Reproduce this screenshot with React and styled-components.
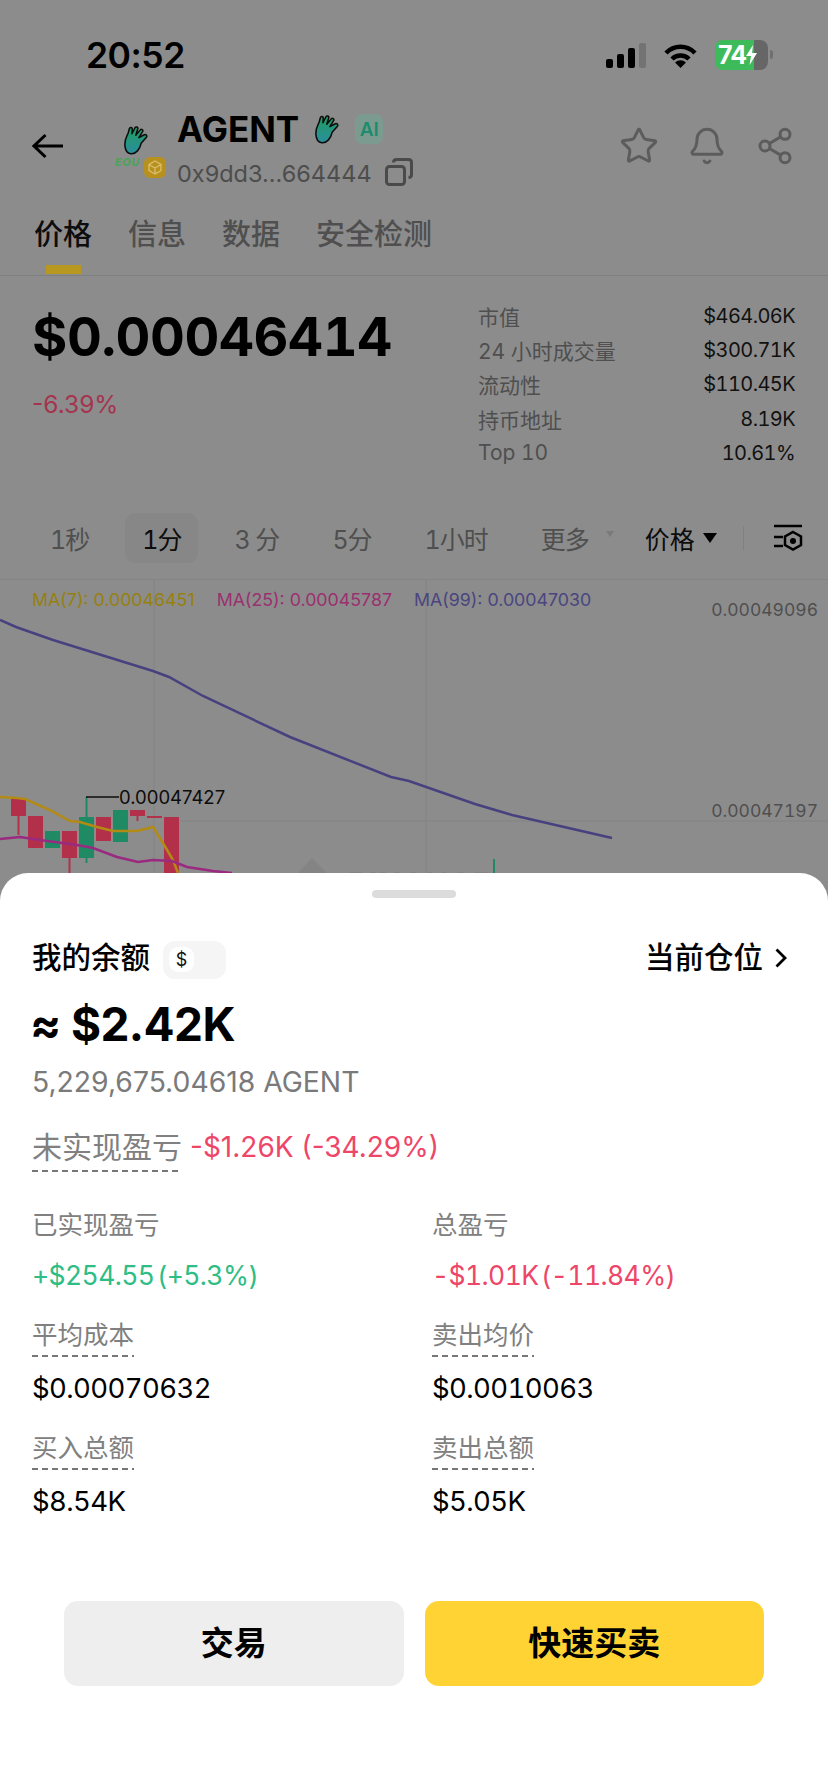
import React from 'react';
import styled, { createGlobalStyle } from 'styled-components';
import { Star, Bell, Share2 } from 'lucide-react';

const GlobalStyle = createGlobalStyle`
  html, body {
    margin: 0;
    padding: 0;
    background: #8c8c8c;
    font-family: Inter, "Noto Sans CJK SC", sans-serif;
  }
  * {
    box-sizing: border-box;
  }
`;

const Page = styled.div`
  width: 828px;
  height: 1792px;
  overflow: hidden;
  background: #8c8c8c;
`;

const Backdrop = styled.div`
  height: 873px;
  overflow: hidden;
`;

/* status bar */
const StatusBar = styled.div`
  height: 110px;
  display: flex;
  align-items: center;
  padding: 0 60px 0 86px;
`;

const Clock = styled.div`
  font-size: 35.5px;
  font-weight: 600;
  letter-spacing: -0.5px;
  color: #000;
`;

const StatusIcons = styled.div`
  margin-left: auto;
  display: flex;
  align-items: center;
  gap: 17px;
`;

const Signal = styled.div`
  display: flex;
  align-items: flex-end;
  gap: 4px;
  height: 25px;
`;

const SignalBar = styled.span`
  width: 7px;
  height: ${(p) => p.$h}px;
  border-radius: 2px;
  background: ${(p) => (p.$off ? '#737373' : '#000')};
`;

const Battery = styled.div`
  position: relative;
  width: 53px;
  height: 30px;
  padding-left: 3px;
  border-radius: 8px;
  display: flex;
  align-items: center;
  font-size: 25px;
  font-weight: 700;
  letter-spacing: -0.8px;
  color: #fff;
  background: linear-gradient(90deg, #3dbb5a 0 39px, #666 39px);

  &::after {
    content: '';
    position: absolute;
    right: -5px;
    top: 10px;
    width: 3px;
    height: 9px;
    border-radius: 0 3px 3px 0;
    background: #6f6f6f;
  }
`;

/* token header */
const Header = styled.div`
  height: 90px;
  display: flex;
  align-items: flex-start;
  padding: 0 33px 0 32px;
`;

const BackButton = styled.svg`
  width: 32px;
  height: 26px;
  margin-top: 23px;
  flex: none;
`;

const TokenLogo = styled.div`
  width: 51px;
  margin: 16px 0 0 51px;
  display: flex;
  flex-direction: column;
  gap: 2px;
`;

const LogoHand = styled.div`
  height: 29px;
  padding-left: 8px;
`;

const LogoFoot = styled.div`
  display: flex;
  align-items: flex-start;
  gap: 2px;
`;

const Eou = styled.span`
  width: 27px;
  margin-top: 1px;
  font-size: 11px;
  line-height: 9px;
  font-weight: 800;
  font-style: italic;
  letter-spacing: 0.5px;
  color: #4fa25c;
`;

const ChainBadge = styled.span`
  width: 22px;
  height: 21px;
  border-radius: 6px;
  background: #b8901e;
  display: flex;
  align-items: center;
  justify-content: center;
`;

const TokenInfo = styled.div`
  margin: 2px 0 0 11px;
`;

const TitleRow = styled.div`
  display: flex;
  align-items: center;
  height: 34px;
`;

const Title = styled.span`
  font-size: 35px;
  line-height: 34px;
  font-weight: 700;
  color: #000;
`;

const TitleHand = styled.span`
  display: flex;
  margin-left: 15px;
`;

const AiBadge = styled.span`
  width: 28px;
  height: 30px;
  margin-left: 15px;
  border-radius: 7px;
  background: #7c9b90;
  color: #1d8c6c;
  font-size: 19px;
  font-weight: 600;
  display: flex;
  align-items: center;
  justify-content: center;
`;

const AddressRow = styled.div`
  margin-top: 9px;
  height: 36px;
  display: flex;
  align-items: center;
  gap: 13px;
`;

const Address = styled.span`
  font-size: 23.5px;
  color: #4d4d4d;
`;

const CopyIcon = styled.svg`
  width: 28px;
  height: 28px;
  margin-top: -2px;
`;

const HeaderActions = styled.div`
  margin: 16px 0 0 auto;
  display: flex;
  gap: 28px;
  color: #5c5c5c;
`;

/* tabs */
const Tabs = styled.div`
  height: 76px;
  padding: 0 0 0 34px;
  display: flex;
  gap: 36px;
  border-bottom: 1px solid #808080;
`;

const Tab = styled.div`
  position: relative;
  font-size: 29px;
  line-height: 40px;
  margin-top: 15px;
  font-weight: 500;
  color: ${(p) => (p.$active ? '#0d0d0d' : '#4f4f4f')};

  ${(p) =>
    p.$active &&
    `&::after {
      content: '';
      position: absolute;
      left: 12px;
      top: 50px;
      width: 35px;
      height: 9px;
      background: #b8981f;
    }`}
`;

/* price block */
const PriceBlock = styled.div`
  height: 237px;
  display: flex;
  justify-content: space-between;
  padding: 0 33px 0 32px;
`;

const PriceColumn = styled.div`
  padding-top: 31px;
`;

const Price = styled.div`
  font-size: 54px;
  line-height: 60px;
  font-weight: 700;
  letter-spacing: -0.4px;
  font-variant-numeric: tabular-nums;
  color: #000;
`;

const PriceChange = styled.div`
  margin-top: 23px;
  font-size: 24.5px;
  line-height: 28px;
  color: #a5344f;
`;

const Stats = styled.div`
  width: 317px;
  padding-top: 23px;
`;

const StatRow = styled.div`
  height: 34.2px;
  display: flex;
  align-items: center;
  justify-content: space-between;
  font-size: 20px;
  letter-spacing: -0.6px;
  font-variant-numeric: tabular-nums;
  color: #111;
`;

const StatLabel = styled.span`
  font-size: 21px;
  letter-spacing: 0;
  color: #4f4f4f;
`;

/* interval bar */
const IntervalBar = styled.div`
  height: 67px;
  padding: 0 0 17px 33px;
  display: flex;
  align-items: center;
  gap: 19px;
  border-bottom: 1px solid #848484;
`;

const Interval = styled.div`
  position: relative;
  height: 50px;
  padding: 0 17px;
  border-radius: 10px;
  display: flex;
  align-items: center;
  font-size: 25px;
  letter-spacing: -1px;
  font-variant-numeric: tabular-nums;
  white-space: pre;
  color: ${(p) => (p.$active ? '#0d0d0d' : '#4f4f4f')};
  background: ${(p) => (p.$active ? '#878787' : 'transparent')};

  ${(p) =>
    p.$more &&
    `&::after {
      content: '';
      position: absolute;
      right: -8px;
      top: 18px;
      border-left: 4px solid transparent;
      border-right: 4px solid transparent;
      border-top: 6px solid #7a7a7a;
    }`}
`;

const PriceSelect = styled.div`
  display: flex;
  align-items: center;
  gap: 8px;
  margin-left: 20px;
  font-size: 25px;
  color: #0d0d0d;
`;

const Caret = styled.span`
  width: 0;
  height: 0;
  border-left: 7px solid transparent;
  border-right: 7px solid transparent;
  border-top: 10px solid #000;
`;

const BarDivider = styled.span`
  width: 1px;
  height: 24px;
  margin-left: 7px;
  background: #808080;
`;

const ChartSettings = styled.svg`
  width: 30px;
  height: 27px;
  margin-left: 10px;
`;

/* chart */
const Chart = styled.div`
  position: relative;
  height: 293px;
`;

const ChartCanvas = styled.svg`
  position: absolute;
  inset: 0;
  width: 828px;
  height: 293px;
`;

const Legend = styled.div`
  position: relative;
  display: flex;
  gap: 22px;
  padding: 9px 32px 0;
  font-size: 17.8px;
  line-height: 22px;
`;

const LegendItem = styled.span`
  color: ${(p) => p.$color};
`;

const AxisLabel = styled.span`
  position: absolute;
  right: 10px;
  top: ${(p) => p.$top}px;
  font-size: 17.5px;
  line-height: 22px;
  font-variant-numeric: tabular-nums;
  color: #4f4f4f;
`;

const Callout = styled.span`
  position: absolute;
  left: 119px;
  top: 206px;
  font-size: 18.5px;
  line-height: 22px;
  color: #0d0d0d;
`;

const Watermark = styled.span`
  position: absolute;
  left: 348px;
  top: 285px;
  font-size: 30px;
  line-height: 36px;
  font-weight: 700;
  letter-spacing: 1px;
  color: #848484;
`;

/* bottom sheet */
const Sheet = styled.div`
  height: 919px;
  background: #fff;
  border-radius: 28px 28px 0 0;
  padding-top: 17px;
`;

const Handle = styled.div`
  width: 84px;
  height: 8px;
  margin: 0 auto;
  border-radius: 4px;
  background: #dcdcdc;
`;

const Balance = styled.div`
  padding: 43px 41px 0 32px;
`;

const BalanceHead = styled.div`
  height: 38px;
  display: flex;
  align-items: center;
`;

const HeadText = styled.span`
  font-size: 29.5px;
  line-height: 38px;
  padding-bottom: 6px;
  font-weight: 500;
  color: #000;
`;

const CurrencyToggle = styled.div`
  width: 63px;
  height: 38px;
  margin-left: 13px;
  padding: 6px;
  border-radius: 12px;
  background: #f5f5f5;
`;

const CurrencyKnob = styled.div`
  width: 25px;
  height: 25px;
  border-radius: 9px;
  background: #fff;
  display: flex;
  align-items: center;
  justify-content: center;
  font-size: 18px;
  color: #111;
`;

const PositionLink = styled.div`
  margin-left: auto;
  display: flex;
  align-items: center;
  gap: 12px;
`;

const Chevron = styled.svg`
  width: 12px;
  height: 20px;
  margin-top: -4px;
`;

const Total = styled.div`
  margin: 17px 0 0 -2px;
  font-size: 46px;
  line-height: 56px;
  font-weight: 700;
  letter-spacing: -0.6px;
  color: #000;
`;

const TokenAmount = styled.div`
  margin-top: 14px;
  font-size: 28.3px;
  line-height: 32px;
  color: #7a7a7a;
`;

const Unrealized = styled.div`
  margin-top: 34px;
  display: flex;
  align-items: flex-start;
  gap: 8px;
`;

const UnrealizedValue = styled.div`
  font-size: 28px;
  line-height: 30px;
  color: #ee4668;
`;

const Label = styled.span`
  display: inline-block;
  font-size: ${(p) => (p.$large ? 30 : 25.5)}px;
  line-height: 30px;
  color: #808080;
  padding-bottom: ${(p) => (p.$gap ? p.$gap : 0)}px;
  background: ${(p) =>
    p.$gap
      ? 'repeating-linear-gradient(90deg, #777 0 6px, transparent 6px 10px) left bottom / 100% 2px no-repeat'
      : 'none'};
`;

const Value = styled.div`
  font-size: ${(p) => p.$size || 27.5}px;
  line-height: 30px;
  letter-spacing: -0.6px;
  font-variant-numeric: tabular-nums;
  word-spacing: ${(p) => (p.$tight ? -4 : 0)}px;
  color: ${(p) => p.$color || '#000'};
`;

const Metrics = styled.div`
  margin-top: 38px;
  display: grid;
  grid-template-columns: 400px 1fr;
  row-gap: 30px;
`;

const Metric = styled.div`
  display: flex;
  flex-direction: column;
  align-items: flex-start;
  gap: ${(p) => p.$gap}px;
`;

const Actions = styled.div`
  margin-top: 85px;
  padding: 0 64px;
  display: flex;
  gap: 21px;
`;

const ActionButton = styled.button`
  flex: 1;
  height: 85px;
  padding: 0 0 6px;
  border: none;
  border-radius: 14px;
  font-family: inherit;
  font-size: 33px;
  font-weight: 600;
  color: #000;
  background: ${(p) => (p.$primary ? '#ffd333' : '#eeeeee')};
`;

const HandIcon = ({ id }) => (
  <svg width="26" height="29" viewBox="0 0 26 30">
    <defs>
      <linearGradient id={id} x1="0" y1="0" x2="0" y2="1">
        <stop offset="0" stopColor="#1f9c62" />
        <stop offset="1" stopColor="#2b8f9c" />
      </linearGradient>
    </defs>
    <path
      d="M1.5 20C1 14 3.5 11 5 7L6.2 2.6C6.8 .8 9.4 1.4 9.2 3.4L8.8 8L12 1.8C12.9 .2 15.4 1.2 14.8 3L12.8 9.6L17.4 4C18.6 2.6 20.8 4.2 19.8 5.8L16 12L21.6 9C23.4 8.2 25 10.2 23.6 11.8L18.5 17.5C17 24 13 29.2 7.6 28.6C3.8 28.2 1.8 24.4 1.5 20Z"
      fill={`url(#${id})`}
      stroke="#0d0d0d"
      strokeWidth="1.6"
      strokeLinejoin="round"
    />
  </svg>
);

const MA99 = '0,620 16,627 53,640 153,671 169,677 203,696 290,737 391,777 409,781 475,804 512,815 612,838';
const MA7 = '0,797 17,798 25,799 50,810 70,821 80,822 97,827 113,831 137,831 153,827 163,843 173,860 178,873';
const MA25 = '0,839 20,837 40,840 77,845 93,848 117,857 138,862 153,860 172,861 187,867 213,871 232,873';

const candles = [
  { x: 11, w: 15, top: 798, bottom: 816, wick: [816, 835], up: false },
  { x: 28, w: 15, top: 816, bottom: 848, up: false },
  { x: 45, w: 15, top: 831, bottom: 848, up: true },
  { x: 62, w: 15, top: 831, bottom: 858, wick: [858, 873], up: false },
  { x: 79, w: 15, top: 817, bottom: 858, wick: [797, 863], up: true },
  { x: 96, w: 15, top: 817, bottom: 841, up: false },
  { x: 113, w: 15, top: 810, bottom: 842, up: true },
  { x: 130, w: 15, top: 810, bottom: 816, wick: [816, 821], up: false },
  { x: 147, w: 15, top: 816, bottom: 818, up: false },
  { x: 164, w: 15, top: 817, bottom: 873, up: false },
];

const stats = [
  ['市值', '$464.06K'],
  ['24 小时成交量', '$300.71K'],
  ['流动性', '$110.45K'],
  ['持币地址', '8.19K'],
  ['Top 10', '10.61%'],
];

const intervals = ['1秒', '1分', '3 分', '5分', '1小时', '更多'];

export default function App() {
  return (
    <Page>
      <GlobalStyle />
      <Backdrop>
        <StatusBar>
          <Clock>20:52</Clock>
          <StatusIcons>
            <Signal>
              <SignalBar $h={9} />
              <SignalBar $h={14} />
              <SignalBar $h={20} />
              <SignalBar $h={25} $off />
            </Signal>
            <svg width="35" height="25" viewBox="0 0 35 25">
              <path d="M3 10A20 20 0 0 1 32 10M9 16A12 12 0 0 1 26 16" fill="none" stroke="#000" strokeWidth="4.5" />
              <path d="M17.5 25L12 19.5A8 8 0 0 1 23 19.5Z" fill="#000" />
            </svg>
            <Battery>
              74
              <svg width="11" height="20" viewBox="0 0 11 20">
                <path d="M7 0L0 11H5L3.5 20L11 8H6Z" fill="#fff" />
              </svg>
            </Battery>
          </StatusIcons>
        </StatusBar>

        <Header>
          <BackButton viewBox="0 0 32 26">
            <path d="M2 13H31M13.5 2L2 13L13.5 24" fill="none" stroke="#000" strokeWidth="3" />
          </BackButton>
          <TokenLogo>
            <LogoHand>
              <HandIcon id="hand-a" />
            </LogoHand>
            <LogoFoot>
              <Eou>EOU</Eou>
              <ChainBadge>
                <svg width="14" height="15" viewBox="0 0 14 15">
                  <path d="M7 1L13 4.5V10.5L7 14L1 10.5V4.5ZM1 4.5L7 8L13 4.5M7 8V14" fill="none" stroke="#d9bd6a" strokeWidth="1.4" />
                </svg>
              </ChainBadge>
            </LogoFoot>
          </TokenLogo>
          <TokenInfo>
            <TitleRow>
              <Title>AGENT</Title>
              <TitleHand>
                <HandIcon id="hand-b" />
              </TitleHand>
              <AiBadge>AI</AiBadge>
            </TitleRow>
            <AddressRow>
              <Address>0x9dd3...664444</Address>
              <CopyIcon viewBox="0 0 28 28">
                <rect x="1.5" y="8.5" width="18" height="18" rx="3" fill="none" stroke="#4a4a4a" strokeWidth="3" />
                <path d="M8.5 4.5C8.5 2.5 9.5 1.5 11.5 1.5H23.5C25.5 1.5 26.5 2.5 26.5 4.5V16.5C26.5 18.5 25.5 19.5 23.5 19.5" fill="none" stroke="#4a4a4a" strokeWidth="3" />
              </CopyIcon>
            </AddressRow>
          </TokenInfo>
          <HeaderActions>
            <Star size={40} strokeWidth={1.8} />
            <Bell size={40} strokeWidth={1.8} />
            <Share2 size={40} strokeWidth={1.8} />
          </HeaderActions>
        </Header>

        <Tabs>
          <Tab $active>价格</Tab>
          <Tab>信息</Tab>
          <Tab>数据</Tab>
          <Tab>安全检测</Tab>
        </Tabs>

        <PriceBlock>
          <PriceColumn>
            <Price>$0.00046414</Price>
            <PriceChange>-6.39%</PriceChange>
          </PriceColumn>
          <Stats>
            {stats.map(([label, value]) => (
              <StatRow key={label}>
                <StatLabel>{label}</StatLabel>
                <span>{value}</span>
              </StatRow>
            ))}
          </Stats>
        </PriceBlock>

        <IntervalBar>
          {intervals.map((item) => (
            <Interval key={item} $active={item === '1分'} $more={item === '更多'}>
              {item}
            </Interval>
          ))}
          <PriceSelect>
            价格
            <Caret />
          </PriceSelect>
          <BarDivider />
          <ChartSettings viewBox="0 0 30 27">
            <path d="M1 2H29M1 13H10M1 22H10" fill="none" stroke="#000" strokeWidth="2.5" />
            <path d="M20 8L28 12.5V21L20 25.5L12 21V12.5Z" fill="none" stroke="#000" strokeWidth="2.5" />
            <circle cx="20" cy="17" r="3" fill="#000" />
          </ChartSettings>
        </IntervalBar>

        <Chart>
          <ChartCanvas viewBox="0 580 828 293">
            <path d="M154 580V873M426 580V873M180 821H828" stroke="#858585" strokeWidth="1.5" fill="none" />
            <path d="M298 873L312 858L327 873Z" fill="#848484" />
            <path d="M494 859V873" stroke="#1f8a63" strokeWidth="2" />
            {candles.map((c) => {
              const color = c.up ? '#1f8a63' : '#b3304a';
              return (
                <g key={c.x}>
                  {c.wick && (
                    <path d={`M${c.x + c.w / 2} ${c.wick[0]}V${c.wick[1]}`} stroke={color} strokeWidth="2" />
                  )}
                  <rect x={c.x} y={c.top} width={c.w} height={c.bottom - c.top} fill={color} />
                </g>
              );
            })}
            <path d="M86 797H119" stroke="#0d0d0d" strokeWidth="1.5" fill="none" />
            <polyline points={MA99} fill="none" stroke="#47427f" strokeWidth="2.5" />
            <polyline points={MA7} fill="none" stroke="#b38a14" strokeWidth="2.5" />
            <polyline points={MA25} fill="none" stroke="#9a2a80" strokeWidth="2.5" />
          </ChartCanvas>
          <Legend>
            <LegendItem $color="#96800f">MA(7): 0.00046451</LegendItem>
            <LegendItem $color="#9c2f70">MA(25): 0.00045787</LegendItem>
            <LegendItem $color="#4a4580">MA(99): 0.00047030</LegendItem>
          </Legend>
          <AxisLabel $top={19}>0.00049096</AxisLabel>
          <AxisLabel $top={220}>0.00047197</AxisLabel>
          <Callout>0.00047427</Callout>
          <Watermark>BINANCE</Watermark>
        </Chart>
      </Backdrop>

      <Sheet>
        <Handle />
        <Balance>
          <BalanceHead>
            <HeadText>我的余额</HeadText>
            <CurrencyToggle>
              <CurrencyKnob>$</CurrencyKnob>
            </CurrencyToggle>
            <PositionLink>
              <HeadText>当前仓位</HeadText>
              <Chevron viewBox="0 0 12 20">
                <path d="M1.5 1.5L10 10L1.5 18.5" fill="none" stroke="#000" strokeWidth="2.8" />
              </Chevron>
            </PositionLink>
          </BalanceHead>
          <Total>≈ $2.42K</Total>
          <TokenAmount>5,229,675.04618 AGENT</TokenAmount>
          <Unrealized>
            <Label $large $gap={10}>未实现盈亏</Label>
            <UnrealizedValue>-$1.26K (-34.29%)</UnrealizedValue>
          </Unrealized>
          <Metrics>
            <Metric $gap={20}>
              <Label>已实现盈亏</Label>
              <Value $size={26.5} $tight $color="#2ebd85">+$254.55 (+5.3%)</Value>
            </Metric>
            <Metric $gap={20}>
              <Label>总盈亏</Label>
              <Value $size={26.5} $tight $color="#ee4668">-$1.01K (-11.84%)</Value>
            </Metric>
            <Metric $gap={16}>
              <Label $gap={7}>平均成本</Label>
              <Value>$0.00070632</Value>
            </Metric>
            <Metric $gap={16}>
              <Label $gap={7}>卖出均价</Label>
              <Value>$0.0010063</Value>
            </Metric>
            <Metric $gap={16}>
              <Label $gap={7}>买入总额</Label>
              <Value>$8.54K</Value>
            </Metric>
            <Metric $gap={16}>
              <Label $gap={7}>卖出总额</Label>
              <Value>$5.05K</Value>
            </Metric>
          </Metrics>
        </Balance>
        <Actions>
          <ActionButton>交易</ActionButton>
          <ActionButton $primary>快速买卖</ActionButton>
        </Actions>
      </Sheet>
    </Page>
  );
}
